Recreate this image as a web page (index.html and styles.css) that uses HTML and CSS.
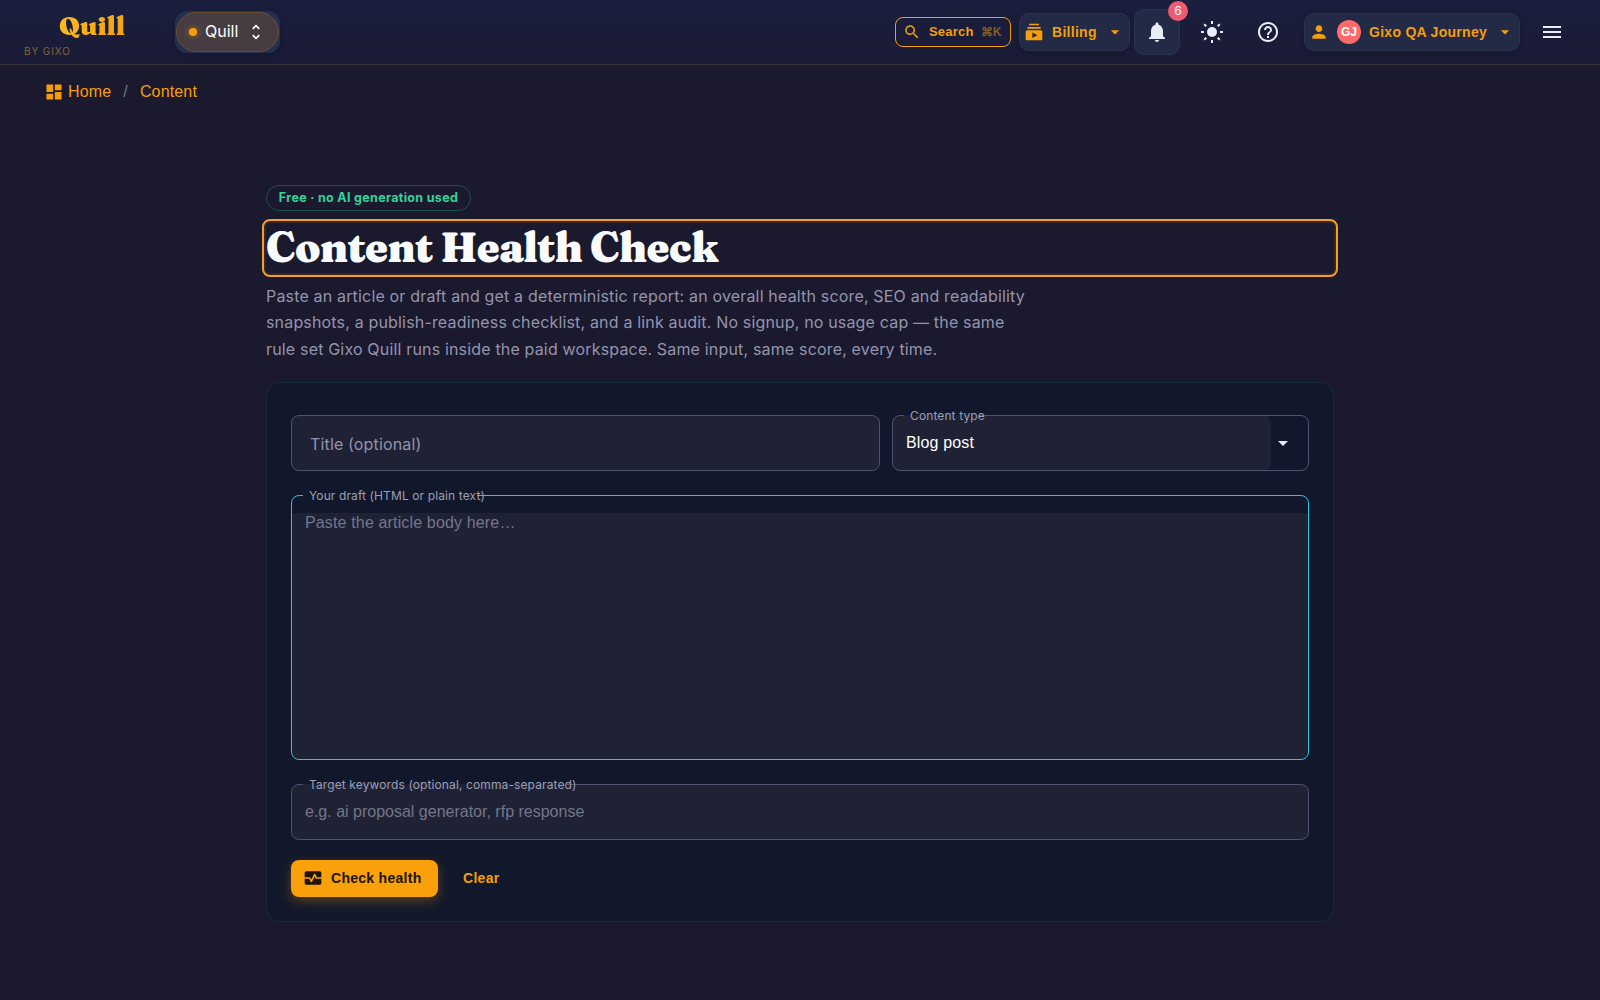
FILE: index.html
```
<!DOCTYPE html>
<html lang="en">
<head>
    <meta charset="UTF-8">
    <meta name="viewport" content="width=device-width, initial-scale=1.0">
    <title>Content Health Check</title>
    <link rel="stylesheet" href="styles.css">
</head>
<body>
    <header class="topbar">
        <div class="brand">
            <span class="brand-name">Quill</span>
            <span class="brand-by">BY GIXO</span>
        </div>
        <div class="switcher">
            <button class="switcher-pill">
                <span class="dot"></span>
                <span class="switcher-name">Quill</span>
                <svg class="icon" width="20" height="20" viewBox="0 0 24 24"><path d="M12 5.83 15.17 9l1.41-1.41L12 3 7.41 7.59 8.83 9zm0 12.34L8.83 15l-1.41 1.41L12 21l4.59-4.59L15.17 15z"/></svg>
            </button>
        </div>

        <div class="actions">
            <button class="search">
                <svg class="icon" width="18" height="18" viewBox="0 0 24 24"><path d="M15.5 14h-.79l-.28-.27C15.41 12.59 16 11.11 16 9.5 16 5.91 13.09 3 9.5 3S3 5.91 3 9.5 5.91 16 9.5 16c1.61 0 3.09-.59 4.23-1.57l.27.28v.79l5 4.99L20.49 19zm-6 0C7.01 14 5 11.99 5 9.5S7.01 5 9.5 5 14 7.01 14 9.5 11.99 14 9.5 14"/></svg>
                <span>Search</span>
                <span class="shortcut">⌘K</span>
            </button>
            <button class="menu-btn billing">
                <svg class="icon" width="20" height="20" viewBox="0 0 24 24"><path d="M20 8H4V6h16zm-2-6H6v2h12zm4 10v8c0 1.100-.9 2-2 2H4c-1.100 0-2-.9-2-2v-8c0-1.100.9-2 2-2h16c1.100 0 2 .9 2 2m-6 4-6-3.270v6.530z"/></svg>
                <span>Billing</span>
                <svg class="icon caret" width="20" height="20" viewBox="0 0 24 24"><path d="m7 10 5 5 5-5z"/></svg>
            </button>
            <button class="bell">
                <svg class="icon" width="24" height="24" viewBox="0 0 24 24"><path d="M12 22c1.100 0 2-.9 2-2h-4c0 1.100.89 2 2 2m6-6v-5c0-3.070-1.640-5.640-4.500-6.320V4c0-.83-.67-1.500-1.500-1.500s-1.500.67-1.500 1.500v.68C7.630 5.360 6 7.920 6 11v5l-2 2v1h16v-1z"/></svg>
                <span class="badge">6</span>
            </button>
            <button class="icon-btn sun">
                <svg class="icon" width="24" height="24" viewBox="0 0 24 24"><circle cx="12" cy="12" r="5"/><path d="M12 1v3M12 20v3M1 12h3M20 12h3M4.200 4.200l2.100 2.100M17.700 17.700l2.100 2.100M4.200 19.800l2.100-2.100M17.700 6.300l2.100-2.100" stroke="currentColor" stroke-width="2"/></svg>
            </button>
            <button class="icon-btn help">
                <svg class="icon" width="24" height="24" viewBox="0 0 24 24"><path d="M11 18h2v-2h-2zm1-16C6.480 2 2 6.480 2 12s4.480 10 10 10 10-4.480 10-10S17.520 2 12 2m0 18c-4.410 0-8-3.590-8-8s3.590-8 8-8 8 3.590 8 8-3.590 8-8 8m0-14c-2.210 0-4 1.790-4 4h2c0-1.100.9-2 2-2s2 .9 2 2c0 2-3 1.750-3 5h2c0-2.250 3-2.500 3-5 0-2.210-1.790-4-4-4"/></svg>
            </button>
            <button class="menu-btn account">
                <svg class="icon" width="20" height="20" viewBox="0 0 24 24"><path d="M12 12c2.210 0 4-1.790 4-4s-1.790-4-4-4-4 1.790-4 4 1.790 4 4 4m0 2c-2.670 0-8 1.340-8 4v2h16v-2c0-2.660-5.330-4-8-4"/></svg>
                <span class="avatar">GJ</span>
                <span>Gixo QA Journey</span>
                <svg class="icon caret" width="20" height="20" viewBox="0 0 24 24"><path d="m7 10 5 5 5-5z"/></svg>
            </button>
            <button class="icon-btn burger">
                <svg class="icon" width="24" height="24" viewBox="0 0 24 24"><path d="M3 18h18v-2H3zm0-5h18v-2H3zm0-7v2h18V6z"/></svg>
            </button>
        </div>
    </header>

    <nav class="breadcrumb">
        <svg class="icon" width="20" height="20" viewBox="0 0 24 24"><path d="M11 21H3v-7h8zm2 0h8v-9h-8zm8-11V3h-8v7zm-10-7H3v9h8z"/></svg>
        <a>Home</a>
        <span class="sep">/</span>
        <a>Content</a>
    </nav>

    <main class="container">
        <span class="chip">Free · no AI generation used</span>
        <h1>Content Health Check</h1>
        <p class="lead">Paste an article or draft and get a deterministic report: an overall health score, SEO and readability snapshots, a publish-readiness checklist, and a link audit. No signup, no usage cap — the same rule set Gixo Quill runs inside the paid workspace. Same input, same score, every time.</p>

        <section class="card">
            <div class="row">
                <div class="field">
                    <input class="title-input" type="text" placeholder="Title (optional)">
                    <fieldset class="outline"></fieldset>
                </div>
                <div class="field select">
                    <div class="select-value">Blog post</div>
                    <svg class="icon" width="24" height="24" viewBox="0 0 24 24"><path d="m7 10 5 5 5-5z"/></svg>
                    <fieldset class="outline notched"><legend class="notch-type"></legend></fieldset>
                    <label>Content type</label>
                </div>
            </div>
            <div class="field draft">
                <textarea placeholder="Paste the article body here…"></textarea>
                <fieldset class="outline notched"><legend class="notch-draft"></legend></fieldset>
                <label>Your draft (HTML or plain text)</label>
            </div>
            <div class="field">
                <input type="text" placeholder="e.g. ai proposal generator, rfp response">
                <fieldset class="outline notched"><legend class="notch-keywords"></legend></fieldset>
                <label>Target keywords (optional, comma-separated)</label>
            </div>
            <div class="buttons">
                <button class="primary">
                    <svg class="icon" width="20" height="20" viewBox="0 0 24 24"><path d="M15.110 12.450 14 10.240l-3.110 6.210c-.16.340-.51.550-.89.550s-.73-.21-.89-.55L7.380 13H2v5c0 1.100.9 2 2 2h16c1.100 0 2-.9 2-2v-5h-6c-.38 0-.73-.21-.89-.55M20 4H4c-1.100 0-2 .9-2 2v5h6c.38 0 .73.210.89.550L10 13.760l3.110-6.210c.34-.68 1.450-.68 1.790 0L16.620 11H22V6c0-1.100-.9-2-2-2"/></svg>
                    <span>Check health</span>
                </button>
                <button class="text-btn">Clear</button>
            </div>
        </section>
    </main>
</body>
</html>
```
FILE: styles.css
```
* {
    box-sizing: border-box;
}

body {
    margin: 0;
    min-height: 100vh;
    background: #1b192d;
    color: #f8fafc;
    font-family: "Liberation Sans", Arial, sans-serif;
    font-size: 16px;
}

button {
    display: flex;
    align-items: center;
    margin: 0;
    padding: 0;
    border: none;
    background: none;
    color: #f59e0b;
    font-family: "Liberation Sans", Arial, sans-serif;
    font-weight: 700;
    cursor: pointer;
    white-space: nowrap;
}

.icon {
    display: block;
    flex-shrink: 0;
    fill: currentColor;
}

/* Top bar */
.topbar {
    display: flex;
    align-items: center;
    height: 65px;
    padding: 0 36px 1px 24px;
    background: linear-gradient(180deg, #1a1f3d 0%, #1a1b36 100%);
    border-bottom: 1px solid #383336;
}

.brand {
    display: flex;
    flex-direction: column;
    width: 151px;
    padding-top: 3px;
}

.brand-name {
    align-self: flex-start;
    margin-left: 35px;
    font-family: Fraunces, "DejaVu Serif", serif;
    font-optical-sizing: none;
    font-size: 26px;
    line-height: 32px;
    font-weight: 900;
    letter-spacing: 0;
    background: linear-gradient(135deg, #fbbf24, #f59e0b);
    -webkit-background-clip: text;
    background-clip: text;
    color: transparent;
}

.brand-by {
    padding-top: 3px;
    font-family: Inter, sans-serif;
    font-size: 10px;
    line-height: 12px;
    letter-spacing: 0.9px;
    color: #84623a;
}

.switcher {
    width: 105px;
    height: 42px;
    padding: 1px;
    border-radius: 12px;
    background: #252f50;
    box-shadow: 0 2px 10px rgba(0, 0, 0, 0.2);
}

.switcher-pill {
    width: 103px;
    height: 40px;
    padding-left: 12px;
    border: 1px solid #69502f;
    border-radius: 20px;
    background: #483c43;
    color: #fff;
}

.dot {
    width: 8px;
    height: 8px;
    border-radius: 50%;
    background: #f59e0b;
    box-shadow: 0 0 6px rgba(245, 158, 11, 0.6);
}

.switcher-name {
    width: 41px;
    margin-left: 8px;
    padding-bottom: 2px;
    font-family: Inter, sans-serif;
    font-size: 16px;
    font-weight: 400;
    text-align: left;
}

.actions {
    display: flex;
    align-items: center;
    margin-left: auto;
}

.search {
    width: 116px;
    height: 30px;
    padding-left: 7px;
    border: 1px solid #f59e0b;
    border-radius: 8px;
    font-size: 13px;
    letter-spacing: 0.2px;
}

.search .icon {
    margin-right: 8px;
}

.shortcut {
    margin-left: 7.5px;
    font-size: 12px;
    letter-spacing: -0.2px;
    color: #835c28;
}

.menu-btn {
    height: 38px;
    border: 1px solid #2d3450;
    border-radius: 10px;
    background: #232a45;
    box-shadow: 0 2px 10px rgba(0, 0, 0, 0.2);
    font-size: 14px;
    letter-spacing: 0.28px;
}

.billing {
    width: 111px;
    margin-left: 8px;
    padding-left: 4px;
}

.billing .icon:first-child {
    margin-right: 8px;
}

.menu-btn .caret {
    margin-left: auto;
    margin-right: 4px;
}

.bell {
    position: relative;
    justify-content: center;
    width: 46px;
    height: 46px;
    margin-left: 4px;
    border: 1px solid #2d3450;
    border-radius: 10px;
    background: #232a45;
    color: #e8edf9;
}

.badge {
    position: absolute;
    top: -9px;
    right: -9px;
    width: 20px;
    height: 20px;
    border-radius: 50%;
    background: #ef5b70;
    color: #fff;
    font-family: Inter, sans-serif;
    font-size: 12px;
    font-weight: 400;
    line-height: 20px;
    text-align: center;
}

.icon-btn {
    color: #e8edf9;
}

.sun {
    margin-left: 20px;
}

.help {
    margin-left: 32px;
}

.account {
    width: 216px;
    margin-left: 24px;
    padding-left: 4px;
}

.avatar {
    width: 24px;
    height: 24px;
    margin: 0 8px;
    border-radius: 50%;
    background: #ff6b6b;
    color: #fff;
    font-size: 12px;
    line-height: 24px;
    letter-spacing: 0;
    text-align: center;
}

.burger {
    margin-left: 20px;
}

/* Breadcrumb */
.breadcrumb {
    display: flex;
    align-items: center;
    height: 54px;
    padding-left: 44px;
    color: #f59e0b;
    letter-spacing: 0.15px;
}

.breadcrumb .icon {
    margin-right: 4px;
}

.sep {
    margin: 0 12px;
    color: #74748a;
}

/* Content */
.container {
    width: 1068px;
    margin: 0 auto;
    padding-top: 66px;
}

.chip {
    display: block;
    width: 205px;
    height: 26px;
    border: 1px solid #1b5150;
    border-radius: 13px;
    color: #34d399;
    font-family: Inter, sans-serif;
    font-size: 12.5px;
    font-weight: 700;
    line-height: 24px;
    letter-spacing: 0.32px;
    text-align: center;
    white-space: nowrap;
}

h1 {
    height: 50px;
    margin: 12px 0 0;
    border-radius: 4px;
    outline: 2px solid #eda02f;
    outline-offset: 2px;
    box-shadow: 0 0 0 2px #3b251c;
    font-family: Fraunces, "DejaVu Serif", serif;
    font-optical-sizing: none;
    font-size: 41px;
    font-weight: 900;
    line-height: 48px;
    letter-spacing: -0.58px;
    white-space: nowrap;
}

.lead {
    width: 768px;
    margin: 10px 0 20px;
    color: #9395ad;
    font-family: Inter, sans-serif;
    font-size: 16px;
    line-height: 26.4px;
    letter-spacing: 0.17px;
}

.card {
    display: flex;
    flex-direction: column;
    gap: 24px;
    height: 540px;
    padding: 32px 24px 24px;
    border: 1px solid #152b3b;
    border-radius: 14px;
    background: #12182b;
}

.row {
    display: grid;
    grid-template-columns: 589px 417px;
    gap: 12px;
}

.field {
    position: relative;
    height: 56px;
}

.outline {
    position: absolute;
    inset: 0;
    margin: 0;
    padding: 0 11px;
    border: 1px solid #4f5072;
    border-radius: 8px;
    pointer-events: none;
}

.notched {
    top: -5px;
}

.outline legend {
    height: 11px;
    padding: 0;
}

.notch-type {
    width: 75px;
}

.notch-draft {
    width: 174px;
}

.notch-keywords {
    width: 264px;
}

.field label {
    position: absolute;
    top: -8px;
    left: 18px;
    color: #9c9eb3;
    font-family: Inter, sans-serif;
    font-size: 12px;
    line-height: 17px;
    letter-spacing: 0.113px;
    white-space: nowrap;
}

input,
textarea {
    display: block;
    width: 100%;
    height: 100%;
    margin: 0;
    padding: 0 14px;
    border: none;
    border-radius: 8px;
    outline: none;
    resize: none;
    background: #1f2135;
    color: #fff;
    font-family: "Liberation Sans", Arial, sans-serif;
    font-size: 16px;
}

::placeholder {
    color: #74768a;
    opacity: 1;
}

.title-input {
    padding: 2px 19px 0;
    font-family: Inter, sans-serif;
    letter-spacing: 0.15px;
}

.title-input::placeholder {
    color: #9294aa;
}

.select {
    display: flex;
    align-items: center;
}

.select-value {
    width: 379px;
    height: 56px;
    padding-left: 14px;
    border-radius: 8px;
    background: #1f2135;
    color: #fff;
    line-height: 55px;
    letter-spacing: 0.15px;
}

.select .icon {
    color: #e8edf9;
}

.draft {
    height: 265px;
    padding: 18px 1px 1px;
}

.draft textarea {
    padding: 0 13px;
    border-radius: 0 0 8px 8px;
    line-height: 20px;
    letter-spacing: 0.15px;
}

.draft .outline {
    border-color: #2cc4de;
}

.buttons {
    display: flex;
    align-items: center;
    gap: 25px;
    margin-top: -4px;
}

.primary {
    width: 147px;
    height: 37px;
    padding: 0 0 1px 12px;
    border-radius: 8px;
    background: #f9a00b;
    box-shadow: 0 4px 12px rgba(245, 158, 11, 0.3);
    color: #1d1307;
    font-size: 14px;
    letter-spacing: 0.28px;
}

.primary .icon {
    margin-right: 8px;
}

.text-btn {
    padding-bottom: 2px;
    font-size: 14px;
    letter-spacing: 0.28px;
}
```
